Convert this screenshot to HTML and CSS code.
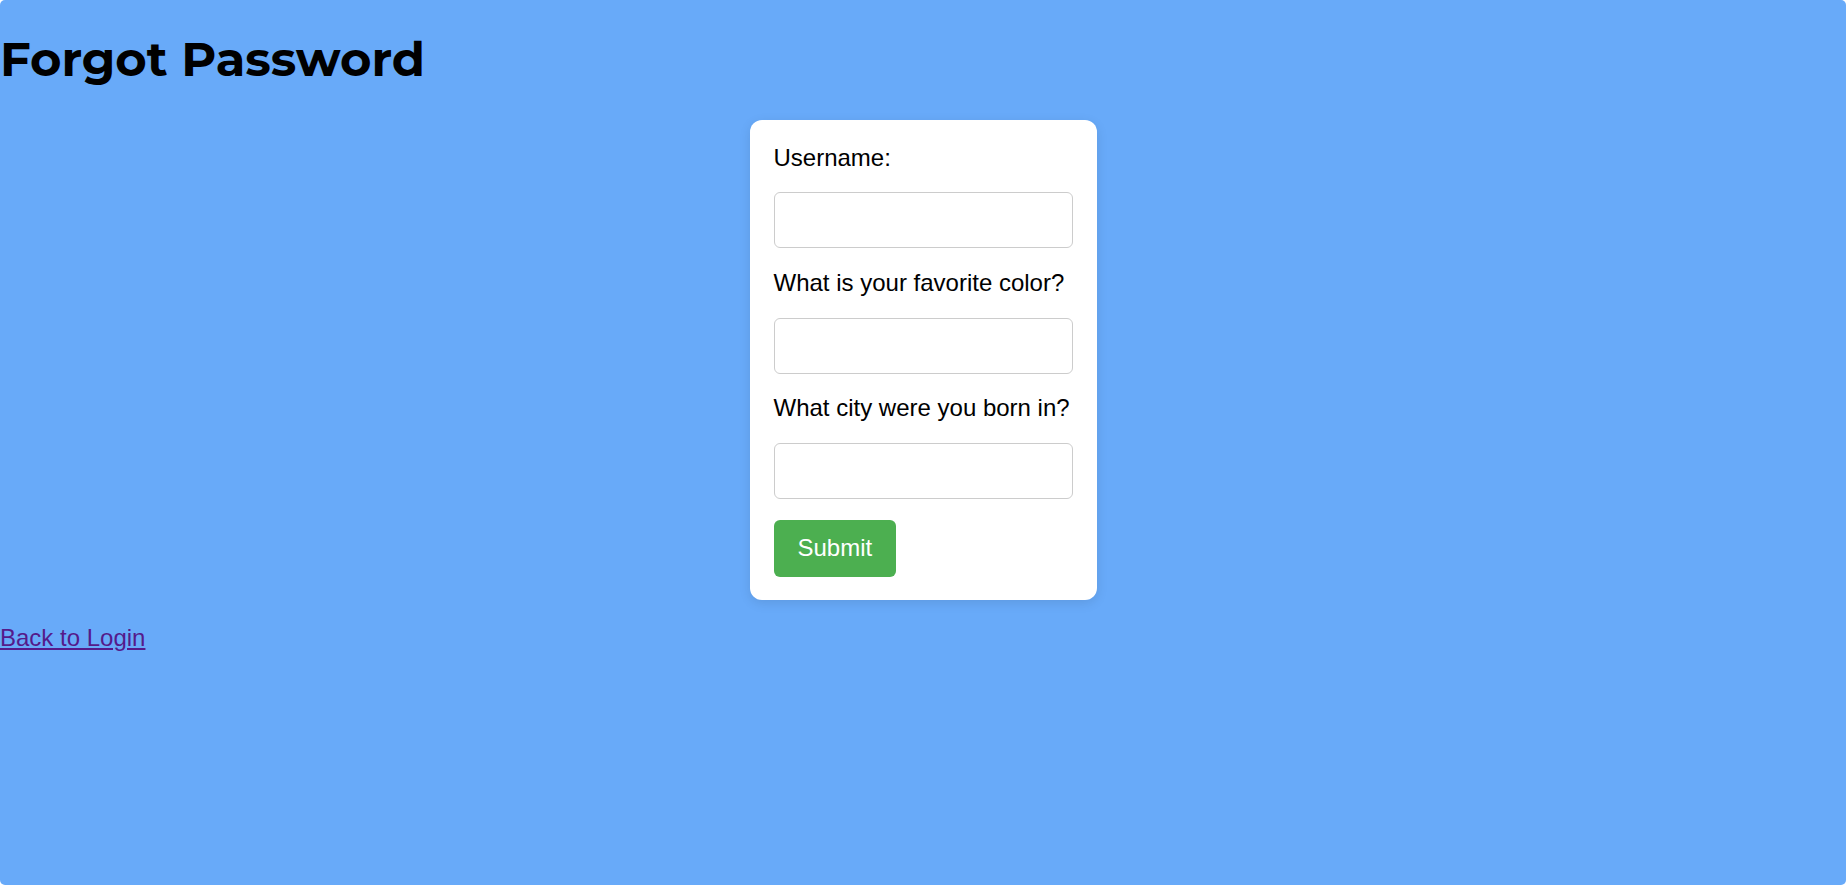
FILE: index.html
```html
<!DOCTYPE html>
<html lang="en">
<head>
<meta charset="utf-8">
<title>Forgot Password</title>
<link rel="stylesheet" href="styles.css">
</head>
<body>
<h1 class="title">Forgot Password</h1>
<form class="card">
  <label class="label" for="username">Username:</label>
  <input class="field" id="username" type="text">
  <label class="label" for="color">What is your favorite color?</label>
  <input class="field" id="color" type="text">
  <label class="label" for="city">What city were you born in?</label>
  <input class="field" id="city" type="text">
  <div class="actions"><button class="submit" type="submit">Submit</button></div>
</form>
<div class="back"><a class="back-link" href="#">Back to Login</a></div>
</body>
</html>
```

FILE: styles.css
```css
html {
  background: #ffffff;
  margin: 0;
  padding: 0;
}
body {
  margin: 0;
  min-height: 885px;
  background: #68aaf9;
  border-radius: 5px;
  display: flow-root;
  font-family: "Liberation Sans", Arial, sans-serif;
  font-size: 24px;
  color: #000;
}
.title {
  margin: 30.5px 0 0;
  font-family: Montserrat, Inter, "DejaVu Sans", sans-serif;
  font-weight: 700;
  font-size: 48px;
  line-height: 56px;
}
.card {
  box-sizing: border-box;
  width: 347px;
  margin: 33.5px auto 0;
  padding: 23.5px 24px 23px;
  background: #ffffff;
  border-radius: 12px;
  box-shadow: 0 3px 12px rgba(0, 0, 0, 0.1);
  display: flex;
  flex-direction: column;
  gap: 20.7px;
}
.label {
  display: block;
  line-height: normal;
}
.field {
  box-sizing: border-box;
  width: 100%;
  height: 56px;
  margin: 0;
  border: 1px solid #cccccc;
  border-radius: 6px;
  background: #fff;
  font-size: 24px;
}
.actions {
  display: flex;
}
.submit {
  font-family: "Liberation Sans", Arial, sans-serif;
  font-size: 24px;
  line-height: normal;
  color: #ffffff;
  background: #4caf50;
  border: none;
  border-radius: 6px;
  padding: 14.5px 24px;
  margin: 0;
}
.back {
  margin-top: 24px;
  line-height: normal;
}
.back-link {
  color: #551a8b;
}
```
